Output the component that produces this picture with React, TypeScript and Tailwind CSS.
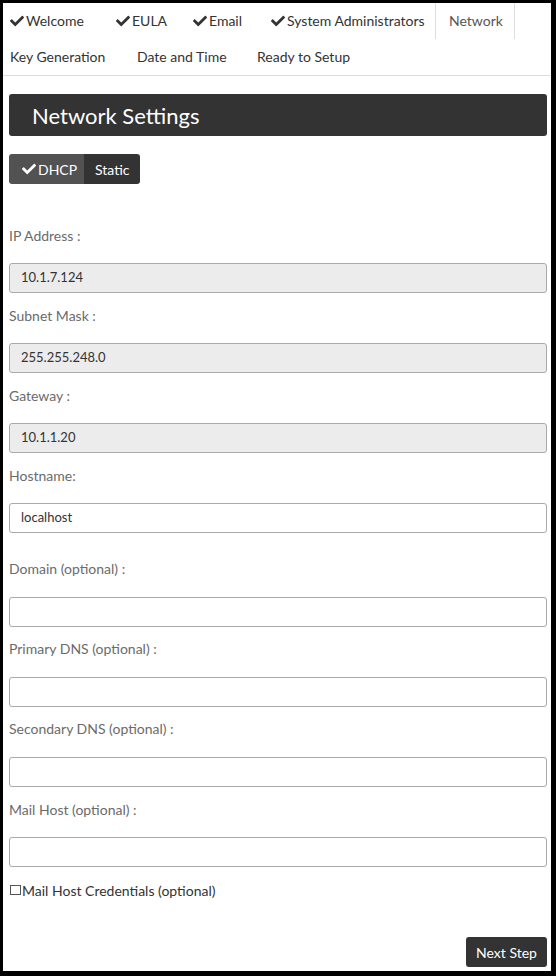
import React from "react";
import { FaCheck } from "react-icons/fa";

const Tab = ({
  label,
  done,
  className,
}: {
  label: string;
  done?: boolean;
  className: string;
}) => (
  <div className={`flex items-center h-[36px] text-[14px] leading-5 text-[#333] whitespace-nowrap ${className}`}>
    {done && <FaCheck size={14} className="mr-[2px] text-[#333] shrink-0" />}
    <span>{label}</span>
  </div>
);

const Field = ({
  label,
  value,
  readOnly,
  labelMt,
  inputMt,
}: {
  label: string;
  value?: string;
  readOnly?: boolean;
  labelMt: string;
  inputMt: string;
}) => (
  <>
    <div className={`h-[20px] leading-[20px] text-[14px] text-[#6b6b6b] ${labelMt}`}>{label}</div>
    <div
      className={`h-[30px] border border-[#a9a9a9] rounded-[3px] flex items-center pl-[11px] text-[13px] text-[#333] ${inputMt} ${
        readOnly ? "bg-[#ececec]" : "bg-white"
      }`}
    >
      {value}
    </div>
  </>
);

export default function App() {
  return (
    <div className="w-[556px] h-[976px] bg-white border-black border-t-[3px] border-l-[3px] border-r-[5px] border-b-[5px] font-['Lato',sans-serif] flex flex-col overflow-hidden">
      <div className="border-b border-[#dddddd]">
        <div className="flex">
          <Tab label="Welcome" done className="w-[98px] pl-[7px]" />
          <Tab label="EULA" done className="w-[77px] pl-[15px]" />
          <Tab label="Email" done className="w-[78px] pl-[15px]" />
          <Tab label="System Administrators" done className="w-[179px] pl-[15px]" />
          <Tab
            label="Network"
            className="w-[80px] pl-[13px] border-l border-r border-[#dddddd] text-[#555]"
          />
        </div>
        <div className="flex">
          <Tab label="Key Generation" className="w-[119px] pl-[7px]" />
          <Tab label="Date and Time" className="w-[120px] pl-[15px]" />
          <Tab label="Ready to Setup" className="w-[130px] pl-[15px]" />
        </div>
      </div>

      <div className="pl-[6px] pr-[4px] flex flex-col">
        <div className="mt-[18px] h-[42px] bg-[#333333] rounded-[3px] flex items-center pl-[23px] text-white text-[22px]">
          Network Settings
        </div>

        <div className="mt-[18px] flex h-[30px] w-fit rounded-[3px] overflow-hidden text-white text-[14px]">
          <div className="w-[75px] bg-[#525252] flex items-center pl-[13px]">
            <FaCheck size={14} className="mr-[2px]" />
            <span>DHCP</span>
          </div>
          <div className="w-[56px] bg-[#333333] flex items-center pl-[11px]">Static</div>
        </div>

        <Field label="IP Address :" value="10.1.7.124" readOnly labelMt="mt-[42px]" inputMt="mt-[17px]" />
        <Field label="Subnet Mask :" value="255.255.248.0" readOnly labelMt="mt-[13px]" inputMt="mt-[17px]" />
        <Field label="Gateway :" value="10.1.1.20" readOnly labelMt="mt-[13px]" inputMt="mt-[17px]" />
        <Field label="Hostname:" value="localhost" labelMt="mt-[13px]" inputMt="mt-[17px]" />
        <Field label="Domain (optional) :" labelMt="mt-[26px]" inputMt="mt-[18px]" />
        <Field label="Primary DNS (optional) :" labelMt="mt-[12px]" inputMt="mt-[18px]" />
        <Field label="Secondary DNS (optional) :" labelMt="mt-[12px]" inputMt="mt-[18px]" />
        <Field label="Mail Host (optional) :" labelMt="mt-[13px]" inputMt="mt-[17px]" />

        <div className="mt-[13px] h-[20px] flex items-center text-[14px] text-[#333]">
          <span className="w-[11px] h-[10px] border border-[#555] mr-[1px] ml-[1px] shrink-0" />
          <span>Mail Host Credentials (optional)</span>
        </div>

        <div className="mt-[37px] flex justify-end">
          <div className="w-[81px] h-[30px] bg-[#333333] rounded-[3px] text-white text-[14px] flex items-center justify-center">
            Next Step
          </div>
        </div>
      </div>
    </div>
  );
}
